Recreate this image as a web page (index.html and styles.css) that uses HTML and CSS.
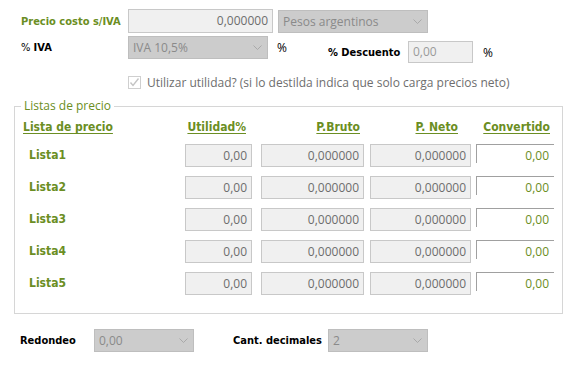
FILE: index.html
```html
<!DOCTYPE html>
<html lang="es">
<head>
<meta charset="utf-8">
<link rel="stylesheet" href="styles.css">
</head>
<body>
<div class="form">
  <div class="row1">
    <span class="lbl lbl-green lbl-w">Precio costo s/IVA</span>
    <div class="txt txt-cost">0,000000</div>
    <div class="sel sel-moneda"><span>Pesos argentinos</span><svg class="chev" width="9" height="5" viewBox="0 0 9 5"><polyline points="0.5,0.5 4.5,4.5 8.5,0.5" fill="none" stroke="#a9a9a9" stroke-width="1"/></svg></div>
  </div>
  <div class="row2">
    <div class="iva">
      <span class="lbl lbl-w">% <b>IVA</b></span>
      <div class="sel sel-iva"><span>IVA 10,5%</span><svg class="chev" width="9" height="5" viewBox="0 0 9 5"><polyline points="0.5,0.5 4.5,4.5 8.5,0.5" fill="none" stroke="#a9a9a9" stroke-width="1"/></svg></div>
      <span class="pct pct-iva">%</span>
    </div>
    <div class="desc">
      <span class="lbl desc-lbl">% Descuento</span>
      <div class="txt txt-desc">0,00</div>
      <span class="pct pct-desc">%</span>
    </div>
  </div>
  <div class="row3">
    <span class="chk"><svg width="11" height="11" viewBox="0 0 11 11"><polyline points="1.5,5.5 4,8.5 9.5,1.5" fill="none" stroke="#c4c4c4" stroke-width="1.4"/></svg></span>
    <span class="chk-text">Utilizar utilidad? (si lo destilda indica que solo carga precios neto)</span>
  </div>
  <div class="group">
    <span class="legend">Listas de precio</span>
    <div class="grid">
      <div class="hd hd-lista">Lista de precio</div>
      <div class="hd hd-util">Utilidad%</div>
      <div class="hd hd-bruto">P.Bruto</div>
      <div class="hd hd-neto">P. Neto</div>
      <div class="hd hd-conv">Convertido</div>

      <div class="lista">Lista1</div>
      <div class="txt c-util">0,00</div>
      <div class="txt c-bruto">0,000000</div>
      <div class="txt c-neto">0,000000</div>
      <div class="conv">0,00</div>

      <div class="lista">Lista2</div>
      <div class="txt c-util">0,00</div>
      <div class="txt c-bruto">0,000000</div>
      <div class="txt c-neto">0,000000</div>
      <div class="conv">0,00</div>

      <div class="lista">Lista3</div>
      <div class="txt c-util">0,00</div>
      <div class="txt c-bruto">0,000000</div>
      <div class="txt c-neto">0,000000</div>
      <div class="conv">0,00</div>

      <div class="lista">Lista4</div>
      <div class="txt c-util">0,00</div>
      <div class="txt c-bruto">0,000000</div>
      <div class="txt c-neto">0,000000</div>
      <div class="conv">0,00</div>

      <div class="lista">Lista5</div>
      <div class="txt c-util">0,00</div>
      <div class="txt c-bruto">0,000000</div>
      <div class="txt c-neto">0,000000</div>
      <div class="conv">0,00</div>
    </div>
  </div>
  <div class="row4">
    <span class="lbl lbl-red">Redondeo</span>
    <div class="sel sel-red"><span>0,00</span><svg class="chev" width="9" height="5" viewBox="0 0 9 5"><polyline points="0.5,0.5 4.5,4.5 8.5,0.5" fill="none" stroke="#a9a9a9" stroke-width="1"/></svg></div>
    <span class="lbl lbl-dec">Cant. decimales</span>
    <div class="sel sel-dec"><span>2</span><svg class="chev" width="9" height="5" viewBox="0 0 9 5"><polyline points="0.5,0.5 4.5,4.5 8.5,0.5" fill="none" stroke="#a9a9a9" stroke-width="1"/></svg></div>
  </div>
</div>
</body>
</html>
```

FILE: styles.css
```css
* { box-sizing: border-box; }
html, body { margin: 0; padding: 0; background: #fff; }
body {
  width: 580px;
  height: 378px;
  overflow: hidden;
  font-family: "Open Sans", "Noto Sans", sans-serif;
  font-size: 12px;
  color: #000;
}
.form { padding-top: 9px; }

.lbl {
  font-family: "DejaVu Sans Condensed", "DejaVu Sans", sans-serif;
  font-weight: bold;
  font-size: 11px;
  color: #000;
  white-space: nowrap;
}
.lbl b { font-weight: bold; }
.lbl-green { color: #6b8e23; }
.lbl-w { width: 107px; flex: none; }

.row1 {
  display: flex;
  align-items: center;
  height: 24px;
  padding-left: 21px;
}
.txt {
  background: #f0f0f0;
  border: 1px solid #c8c8c8;
  color: #6d6d6d;
  text-align: right;
  padding: 0 4px;
  line-height: 20px;
  white-space: nowrap;
}
.txt-cost { width: 145px; height: 24px; line-height: 22px; }

.sel {
  display: flex;
  align-items: center;
  justify-content: space-between;
  background: #cccccc;
  border: 1px solid #bebebe;
  color: #8a8a8a;
  height: 23px;
  padding: 0 5px 0 4px;
  white-space: nowrap;
}
.chev { flex: none; }
.sel-moneda { width: 150px; margin-left: 5px; }

.row2 {
  display: flex;
  align-items: flex-start;
  margin-top: 3px;
  padding-left: 21px;
}
.iva { display: flex; align-items: center; height: 23px; }
.iva .lbl { font-weight: normal; }
.sel-iva { width: 140px; }
.pct { color: #000; }
.pct-iva { width: 51px; margin-left: 9px; }
.desc { display: flex; align-items: center; height: 22px; margin-top: 5px; }
.desc-lbl { width: 80px; }
.txt-desc { width: 65px; height: 22px; text-align: left; padding: 0 4px; color: #9a9a9a; }
.pct-desc { margin-left: 10px; }

.row3 {
  display: flex;
  align-items: center;
  margin-top: 13px;
  padding-left: 128px;
  height: 13px;
}
.chk {
  width: 13px; height: 13px;
  border: 1px solid #cfcfcf;
  display: flex; align-items: center; justify-content: center;
  flex: none;
}
.chk-text { margin-left: 6px; color: #6e6e6e; white-space: nowrap; }

.group {
  position: relative;
  margin: 17px 0 0 14px;
  width: 549px;
  height: 208px;
  border: 1px solid #d6d6d6;
  padding: 13px 0 0 8px;
}
.legend {
  position: absolute;
  left: 6px;
  top: -9px;
  padding: 0 3px;
  background: #fff;
  color: #6b8e23;
  line-height: 16px;
}
.grid {
  display: grid;
  grid-template-columns: 162px 67px 112px 107px 83px;
  grid-template-rows: 15px;
  grid-auto-rows: 23px;
  row-gap: 9px;
}
.hd {
  font-family: "DejaVu Sans Condensed", "DejaVu Sans", sans-serif;
  font-weight: bold;
  font-size: 12px;
  color: #6b8e23;
  text-decoration: underline;
  text-underline-offset: 2px;
  white-space: nowrap;
  line-height: 15px;
}
.hd-util { text-align: right; padding-right: 6px; }
.hd-bruto { text-align: right; padding-right: 4px; }
.hd-neto { text-align: right; padding-right: 13px; }
.hd-conv { text-align: right; padding-right: 4px; }

.lista {
  font-family: "DejaVu Sans Condensed", "DejaVu Sans", sans-serif;
  font-weight: bold;
  font-size: 12px;
  color: #6b8e23;
  padding-left: 6px;
  line-height: 23px;
}
.c-util { width: 67px; }
.c-bruto { width: 103px; justify-self: end; }
.c-neto { width: 101px; justify-self: end; }
.txt.c-util, .txt.c-bruto, .txt.c-neto { height: 23px; line-height: 21px; }
.conv {
  justify-self: end;
  width: 78px;
  height: 19px;
  border-top: 1px solid #a0a0a0;
  border-left: 1px solid #a0a0a0;
  color: #6b8e23;
  text-align: right;
  padding-right: 5px;
  line-height: 21px;
  white-space: nowrap;
}

.row4 {
  display: flex;
  align-items: center;
  margin-top: 15px;
  padding-left: 20px;
  height: 23px;
}
.lbl-red { width: 74px; }
.sel-red { width: 100px; }
.lbl-dec { margin-left: 39px; width: 95px; }
.sel-dec { width: 100px; }
```
